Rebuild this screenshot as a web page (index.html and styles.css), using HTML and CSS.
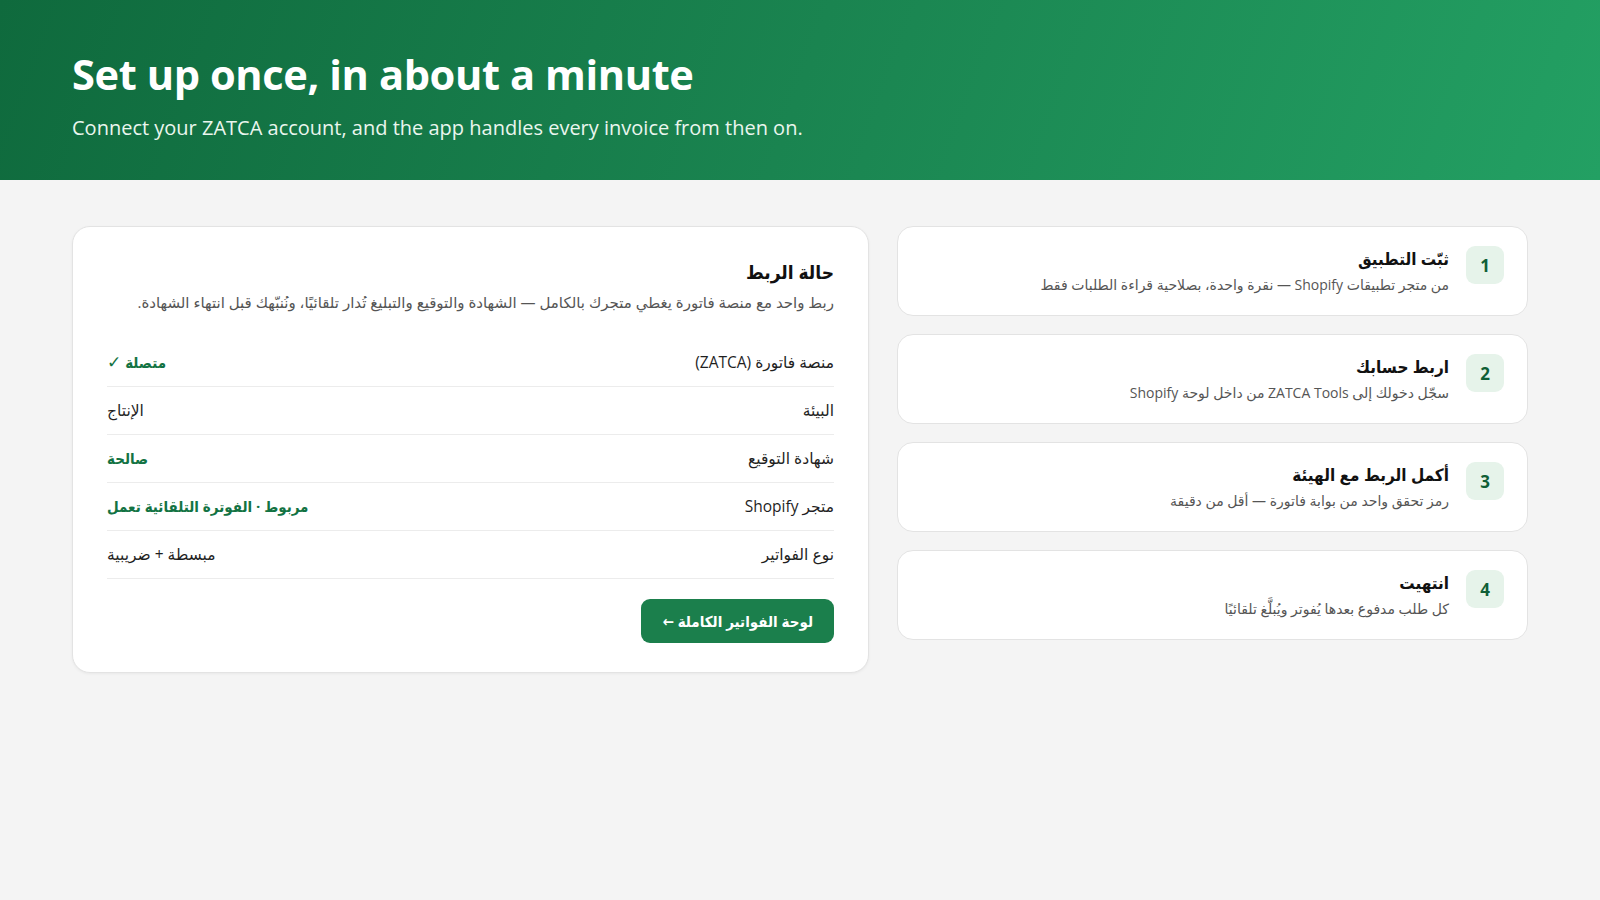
FILE: index.html
```html
<!DOCTYPE html>
<html lang="en">
<head>
<meta charset="utf-8">
<title>ZATCA Tools — Setup</title>
<link rel="stylesheet" href="styles.css">
</head>
<body>
  <header class="hero">
    <h1 class="hero-title">Set up once, in about a minute</h1>
    <p class="hero-sub">Connect your ZATCA account, and the app handles every invoice from then on.</p>
  </header>

  <main class="setup" dir="rtl" lang="ar">
    <ol class="steps">
      <li class="step">
        <span class="step-num">1</span>
        <div class="step-body">
          <h3 class="step-title">ثبّت التطبيق</h3>
          <p class="step-desc">من متجر تطبيقات Shopify — نقرة واحدة، بصلاحية قراءة الطلبات فقط</p>
        </div>
      </li>
      <li class="step">
        <span class="step-num">2</span>
        <div class="step-body">
          <h3 class="step-title">اربط حسابك</h3>
          <p class="step-desc">سجّل دخولك إلى ZATCA Tools من داخل لوحة Shopify</p>
        </div>
      </li>
      <li class="step">
        <span class="step-num">3</span>
        <div class="step-body">
          <h3 class="step-title">أكمل الربط مع الهيئة</h3>
          <p class="step-desc">رمز تحقق واحد من بوابة فاتورة — أقل من دقيقة</p>
        </div>
      </li>
      <li class="step">
        <span class="step-num">4</span>
        <div class="step-body">
          <h3 class="step-title">انتهيت</h3>
          <p class="step-desc">كل طلب مدفوع بعدها يُفوتر ويُبلَّغ تلقائيًا</p>
        </div>
      </li>
    </ol>

    <section class="status-card">
      <h2 class="status-title">حالة الربط</h2>
      <p class="status-desc">ربط واحد مع منصة فاتورة يغطي متجرك بالكامل — الشهادة والتوقيع والتبليغ تُدار تلقائيًا، ونُنبّهك قبل انتهاء الشهادة.</p>
      <dl class="status-list">
        <div class="status-row">
          <dt>منصة فاتورة (ZATCA)</dt>
          <dd class="ok">متصلة <span class="tick">✓</span></dd>
        </div>
        <div class="status-row">
          <dt>البيئة</dt>
          <dd>الإنتاج</dd>
        </div>
        <div class="status-row">
          <dt>شهادة التوقيع</dt>
          <dd class="ok">صالحة</dd>
        </div>
        <div class="status-row">
          <dt>متجر Shopify</dt>
          <dd class="ok">مربوط · الفوترة التلقائية تعمل</dd>
        </div>
        <div class="status-row">
          <dt>نوع الفواتير</dt>
          <dd>مبسطة + ضريبية</dd>
        </div>
      </dl>
      <div class="status-actions">
        <a class="btn-primary" href="#">لوحة الفواتير الكاملة ←</a>
      </div>
    </section>
  </main>
</body>
</html>
```

FILE: styles.css
```css
* {
  box-sizing: border-box;
}

html,
body {
  margin: 0;
  padding: 0;
}

body {
  background: #f4f4f4;
  color: #1a1a1a;
  font-family: "Open Sans", "DejaVu Sans", sans-serif;
  min-height: 900px;
}

/* Bold Arabic runs use the narrower face */
.status-title,
.step-title,
.status-row dd.ok,
.btn-primary {
  font-family: "Open Sans", "DejaVu Sans Condensed", "DejaVu Sans", sans-serif;
}

/* Green banner across the top */
.hero {
  height: 180px;
  padding: 45px 72px 0;
  background: linear-gradient(110deg, #0f6a3d 0%, #1a8450 50%, #23a063 100%);
  color: #ffffff;
}

.hero-title {
  margin: 0;
  font-size: 41.6px;
  line-height: 58px;
  font-weight: 700;
  letter-spacing: -0.4px;
}

.hero-sub {
  margin: 11px 0 0;
  font-size: 20px;
  line-height: 28px;
  color: #eaf6ee;
}

/* Two columns: steps on the right, status on the left (RTL) */
.setup {
  display: grid;
  grid-template-columns: 631px 1fr;
  gap: 28px;
  align-items: start;
  padding: 46px 72px 0;
}

.steps {
  list-style: none;
  margin: 0;
  padding: 0;
  display: flex;
  flex-direction: column;
  gap: 18px;
}

.step {
  display: flex;
  align-items: flex-start;
  gap: 17px;
  background: #ffffff;
  border: 1px solid #e3e3e3;
  border-radius: 16px;
  padding: 19px 23px 19px;
}

.step-num {
  flex: none;
  width: 38px;
  height: 38px;
  border-radius: 9px;
  background: #e6f3ea;
  color: #105f37;
  font-weight: 700;
  font-size: 17px;
  display: flex;
  align-items: center;
  justify-content: center;
}

.step-title {
  margin: 0;
  font-size: 17px;
  line-height: 25px;
  font-weight: 700;
  color: #111111;
}

.step-desc {
  margin: 3px 0 0;
  font-size: 14px;
  line-height: 22px;
  color: #555555;
}

/* Connection status card */
.status-card {
  background: #ffffff;
  border: 1px solid #e3e3e3;
  border-radius: 18px;
  padding: 29px 34px 29px;
  box-shadow: 0 1px 3px rgba(0, 0, 0, 0.05);
}

.status-title {
  margin: 0;
  font-size: 19px;
  line-height: 32px;
  font-weight: 700;
  color: #111111;
}

.status-desc {
  margin: 3px 0 0;
  font-size: 15px;
  line-height: 22px;
  color: #555555;
}

.status-list {
  margin: 26px 0 0;
  padding: 0;
}

.status-row {
  display: flex;
  justify-content: space-between;
  align-items: center;
  padding: 13px 0;
  border-bottom: 1px solid #ececec;
  font-size: 15.5px;
  line-height: 21px;
}

.status-row dt,
.status-row dd {
  margin: 0;
  color: #1f1f1f;
}

.status-row dd.ok {
  color: #137343;
  font-weight: 700;
  font-size: 15px;
}

.tick {
  font-family: "DejaVu Sans", sans-serif;
  font-size: 17px;
  font-weight: 700;
}

.status-actions {
  display: flex;
  justify-content: flex-start;
  margin-top: 20px;
}

.btn-primary {
  display: inline-flex;
  align-items: center;
  height: 44px;
  padding: 0 21px;
  border-radius: 9px;
  background: #1b7f4c;
  color: #ffffff;
  font-weight: 700;
  font-size: 15px;
  text-decoration: none;
}
```
